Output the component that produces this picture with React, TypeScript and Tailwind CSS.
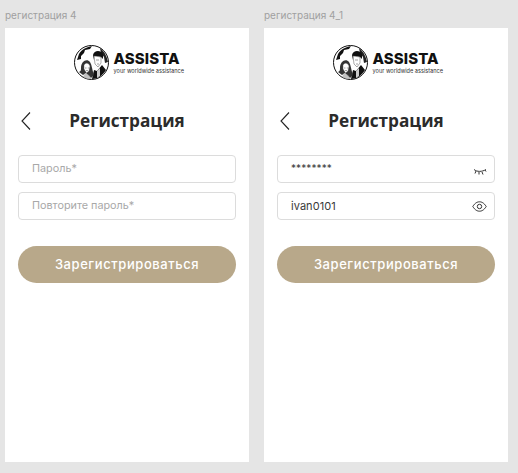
import React from "react";

function Globe() {
  return (
    <svg width="35" height="35" viewBox="0 0 35 35" className="shrink-0">
      <circle cx="17.5" cy="17.5" r="17" fill="#fff" stroke="#111" strokeWidth="1" />
      <path d="M5 9 C8 4 13 2 18 1 L16 4 L11 5 L10 8 L7 11 L7 14 L3 15 Z" fill="#111" />
      <path d="M26 3 C31 7 33 12 34 17 L31 18 L30 12 L27 8 Z" fill="#222" />
      <path d="M19 10 C20 5 27 5 29 9 L29 14 L27 12 L21 11 L20 15 Z" fill="#111" />
      <path d="M20 11 L27 12 L27 18 L24 22 L21 19 Z" fill="#fff" stroke="#555" strokeWidth="0.5" />
      <path d="M22 15 H25 M23 19 H25" stroke="#444" strokeWidth="0.5" />
      <path d="M18 34 L20 25 L23 26 L28 20 L32 25 C29 30 24 34 18 34 Z" fill="#111" />
      <path d="M23 26 L26 23 L26 31 L23 33 Z" fill="#ccc" />
      <path d="M7 23 C7 16 13 13 16 17 C18 20 18 25 20 30 L17 33 L12 28 L9 30 L5 27 C7 26 7 25 7 23 Z" fill="#333" />
      <path d="M10 20 C12 17 15 18 16 21 L15 26 L12.5 28 L10 24 Z" fill="#fff" stroke="#555" strokeWidth="0.4" />
      <path d="M11 23 H12.5 M13.8 23 H15 M12 25.5 H14" stroke="#444" strokeWidth="0.5" />
      <path d="M9 32 L11 28 L15 30 L18 34 L13 34 Z" fill="#aaa" opacity="0.7" />
    </svg>
  );
}

function Logo() {
  return (
    <div className="flex items-center justify-center gap-[5px]">
      <Globe />
      <div className="flex w-[67px] flex-col items-start">
        <span className="font-['Inter',sans-serif] text-[15px] font-extrabold leading-[18px] tracking-[0.1px] text-[#111]">ASSISTA</span>
        <span className="whitespace-nowrap font-['Inter',sans-serif] text-[5.6px] leading-[7px] text-[#333]">your worldwide assistance</span>
      </div>
    </div>
  );
}

function EyeClosed() {
  return (
    <svg width="14" height="8" viewBox="0 0 14 8" fill="none" stroke="#333" strokeWidth="1" className="mt-[6px]">
      <path d="M1 1.5 C4 4 9 4 13 1.5" />
      <path d="M3 3 L2 5.5 M6 4 L6 6.5 M9 4 L10 6.5 M12 2 L13 3.5" />
    </svg>
  );
}

function EyeOpen() {
  return (
    <svg width="15" height="11" viewBox="0 0 15 11" fill="none" stroke="#333" strokeWidth="1">
      <path d="M0.8 5.5 C3 1.8 5.5 0.8 7.5 0.8 C9.5 0.8 12 1.8 14.2 5.5 C12 9.2 9.5 10.2 7.5 10.2 C5.5 10.2 3 9.2 0.8 5.5 Z" />
      <circle cx="7.5" cy="5.5" r="2.2" />
    </svg>
  );
}

function Field({ text, placeholder, icon, up }: { text: string; placeholder?: boolean; icon?: React.ReactNode; up?: boolean }) {
  return (
    <div className="flex h-[28px] items-center justify-between rounded-[4px] border border-[#dcdcdc] pl-[13px] pr-[7px]">
      <span className={`font-['Inter',sans-serif] leading-[14px] ${placeholder ? "text-[10.8px] text-[#a8a8a8]" : "text-[#3a3a3a]"} ${up ? "mb-[3px] text-[10px] tracking-[0.1px]" : ""} ${!placeholder && !up ? "text-[11px] tracking-[0.05px]" : ""}`}>{text}</span>
      {icon}
    </div>
  );
}

function Screen({ label, children }: { label: string; children: React.ReactNode }) {
  return (
    <div className="flex w-[244px] flex-col">
      <div className="h-[28px] pt-[8px] font-['Inter',sans-serif] text-[10px] leading-[14px] text-[#a0a0a0]">{label}</div>
      <div className="flex h-[434px] flex-col bg-white px-[13px] pt-[17px]">
        <Logo />
        <div className="relative mt-[29px] flex h-[24px] items-center justify-center">
          <svg width="12" height="20" viewBox="0 0 12 20" fill="none" stroke="#222" strokeWidth="1.1" className="absolute left-[2px] top-[2px]">
            <path d="M10 1.5 L2 10 L10 18.5" />
          </svg>
          <span className="font-['Open_Sans',sans-serif] text-[17.2px] font-bold leading-[24px] text-[#2b2b2b]">Регистрация</span>
        </div>
        <div className="mt-[22px] flex flex-col gap-[9px]">{children}</div>
        <div className="mt-[26px] flex h-[37px] items-center justify-center rounded-[19px] bg-[#b8a88a] font-['Inter',sans-serif] text-[13px] font-medium tracking-[0.57px] text-white">
          Зарегистрироваться
        </div>
      </div>
    </div>
  );
}

export default function App() {
  return (
    <div className="flex h-[473px] w-[518px] gap-[15px] overflow-hidden bg-[#e5e5e5] pl-[5px]">
      <Screen label="регистрация 4">
        <Field text="Пароль*" placeholder />
        <Field text="Повторите пароль*" placeholder />
      </Screen>
      <Screen label="регистрация 4_1">
        <Field text="********" up icon={<EyeClosed />} />
        <Field text="ivan0101" icon={<EyeOpen />} />
      </Screen>
    </div>
  );
}
